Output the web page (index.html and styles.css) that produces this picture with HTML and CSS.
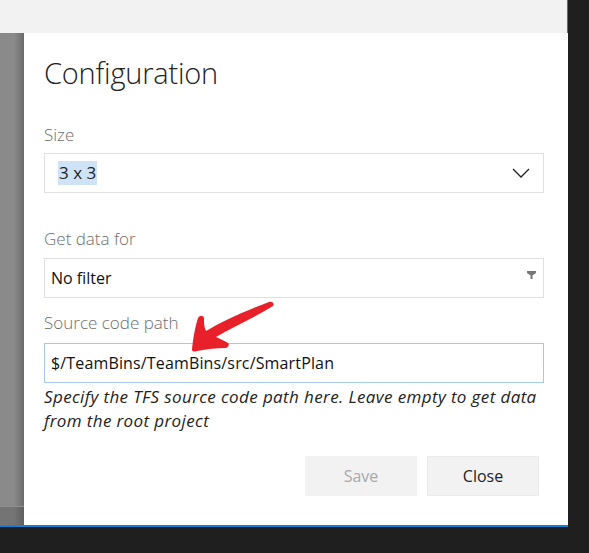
FILE: index.html
```html
<!DOCTYPE html>
<html>
<head>
<meta charset="utf-8">
<link rel="stylesheet" href="styles.css">
</head>
<body>
<div class="window">
  <div class="topbar"></div>
  <div class="main">
    <div class="backdrop">
      <div class="backdrop-bottom"></div>
    </div>
    <div class="dialog">
      <h1 class="title">Configuration</h1>
      <div class="field field-size">
        <label class="label">Size</label>
        <div class="select select-size">
          <span class="sel-text">3 x 3</span>
          <svg class="chevron" width="18" height="10" viewBox="0 0 18 10"><path d="M1 1 L9 9 L17 1" fill="none" stroke="#222" stroke-width="1.3"/></svg>
        </div>
      </div>
      <div class="field field-filter">
        <label class="label">Get data for</label>
        <div class="select select-filter">
          <span class="filter-text">No filter</span>
          <svg class="tri" width="9" height="8" viewBox="0 0 9 8"><path d="M0 0 H9 V2 L5.5 4.5 V8 H3.5 V4.5 L0 2 Z" fill="#777"/></svg>
        </div>
      </div>
      <div class="field field-path">
        <label class="label">Source code path</label>
        <div class="input">$/TeamBins/TeamBins/src/SmartPlan</div>
        <p class="help">Specify the TFS source code path here. Leave empty to get data from the root project</p>
      </div>
      <div class="buttons">
        <button class="btn btn-disabled">Save</button>
        <button class="btn">Close</button>
      </div>
      <svg class="arrow" width="100" height="60" viewBox="0 0 100 60">
        <path d="M7 50 C8 40 10 28 13 19 C15 16 18 16 19 19 C19 24 19 28 21 32 C38 22 60 12 84 3 C87 2 90 4 88 7 C70 18 48 28 31 38 C35 40 40 42 43 44 C45 46 43 49 40 49 C32 49 22 50 12 52 C9 53 7 53 7 50 Z" fill="#e8202a"/>
      </svg>
    </div>
  </div>
</div>
</body>
</html>
```

FILE: styles.css
```css
html, body {
  margin: 0;
  padding: 0;
}
body {
  background: #1f1f1f;
  width: 589px;
  height: 553px;
  overflow: hidden;
  font-family: "Open Sans", "Noto Sans", sans-serif;
}
.window {
  width: 567px;
  height: 525px;
  border-right: 1px solid #1a7fd4;
  border-bottom: 2px solid #1a7fd4;
  display: flex;
  flex-direction: column;
  background: #ffffff;
}
.topbar {
  height: 33px;
  background: #f2f2f2;
  flex: none;
}
.main {
  flex: 1;
  display: flex;
}
.backdrop {
  width: 24px;
  flex: none;
  background: linear-gradient(to right, #8a8a8a 0, #8a8a8a 14px, #7c7c7c 19px, #6a6a6a 24px);
  display: flex;
  flex-direction: column;
  justify-content: flex-end;
}
.backdrop-bottom {
  height: 18px;
  border-top: 1px solid #8e8e8e;
  background: linear-gradient(to right, #747474 0, #747474 14px, #6a6a6a 19px, #5e5e5e 24px);
}
.dialog {
  position: relative;
  flex: 1;
  background: #ffffff;
  padding: 20px 24px 0 20px;
  display: flex;
  flex-direction: column;
}
.title {
  margin: 0;
  font-weight: 300;
  font-size: 29px;
  line-height: 40px;
  color: #222;
  letter-spacing: -0.2px;
}
.label {
  display: block;
  font-size: 17px;
  line-height: 20px;
  color: #6e6e6e;
  font-weight: 300;
}
.field-size {
  margin-top: 32px;
}
.field-size .label {
  margin-bottom: 8px;
}
.select {
  box-sizing: border-box;
  width: 500px;
  height: 40px;
  border: 1px solid #e0e0e0;
  display: flex;
  align-items: center;
  justify-content: space-between;
}
.select-size {
  padding: 0 13px 0 13px;
}
.sel-text {
  background: #cfe3f7;
  color: #1e1e1e;
  font-size: 17px;
  line-height: 24px;
  padding: 0 1px;
}
.chevron {
  display: block;
}
.field-filter {
  margin-top: 36px;
}
.field-filter .label {
  margin-bottom: 9px;
}
.select-filter {
  padding: 0 7px 0 6px;
}
.filter-text {
  font-size: 16px;
  color: #111;
}
.tri {
  display: block;
  margin-top: -6px;
}
.field-path {
  margin-top: 15px;
}
.field-path .label {
  margin-bottom: 10px;
}
.input {
  box-sizing: border-box;
  width: 500px;
  height: 40px;
  border: 1px solid #a6c8ee;
  padding: 0 6px;
  font-size: 16px;
  line-height: 38px;
  color: #111;
  letter-spacing: 0.15px;
}
.help {
  margin: 2px 0 0 0;
  font-style: italic;
  font-size: 17px;
  line-height: 24px;
  color: #222;
  letter-spacing: 0.38px;
  width: 500px;
}
.buttons {
  margin-top: 23px;
  display: flex;
  justify-content: flex-end;
  gap: 10px;
  width: 495px;
}
.btn {
  box-sizing: border-box;
  width: 112px;
  height: 40px;
  border: 1px solid #ebebeb;
  background: #f2f2f2;
  font-family: "Open Sans", "Noto Sans", sans-serif;
  font-size: 16px;
  color: #222;
  padding: 0;
}
.btn-disabled {
  color: #a8a8a8;
  border-color: #f2f2f2;
}
.arrow {
  position: absolute;
  left: 161px;
  top: 266px;
}
```
